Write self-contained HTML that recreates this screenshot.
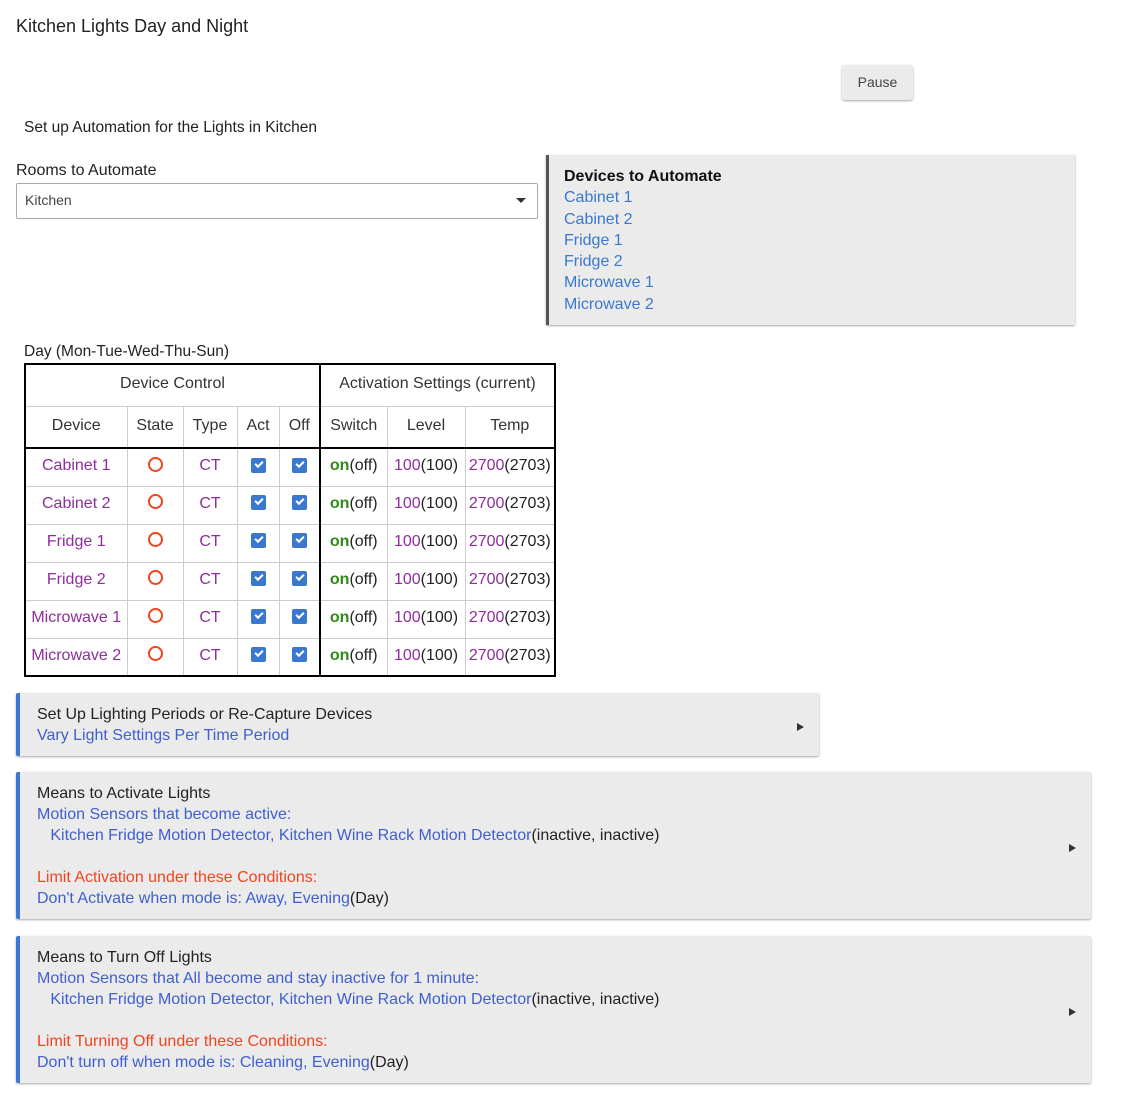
<!DOCTYPE html>
<html><head><meta charset="utf-8"><style>
*{box-sizing:border-box;margin:0;padding:0}
body{width:1126px;height:1107px;background:#fff;font-family:"Liberation Sans",sans-serif;color:#222;position:relative;overflow:hidden}
.a{position:absolute;white-space:nowrap}
.blue{color:#3f5fcf}
.lb{color:#3a78d0}
.red{color:#f0441f}
.pur{color:#8e2d9c}
.grn{color:#2f8a17;font-weight:bold}
.card{position:absolute;background:#ebebeb;border-left:4px solid #3a78d6;border-radius:2px;box-shadow:0 1px 2px rgba(0,0,0,.35);font-size:16px;line-height:21px;padding:11px 0 0 17px}
.arrow{position:absolute;width:0;height:0;border-top:4.5px solid transparent;border-bottom:4.5px solid transparent;border-left:7px solid #333}
table{position:absolute;left:24px;top:363px;border-collapse:collapse;border:2px solid #000;font-size:16px}
td,th{border:1px solid #ccc;text-align:center;font-weight:normal;height:38px;padding:0 0 2px}
th{height:42px;color:#333}
.tk{border-right:2px solid #000}
.hb th{border-bottom:2px solid #000}
.r1 th{border-bottom:1px solid #ccc}
.o{display:inline-block;width:15px;height:15px;border:2px solid #f0441f;border-radius:50%;vertical-align:middle;position:relative;top:-2px}
.cb{display:inline-block;width:15px;height:15px;background:#3a78d0;border-radius:2px;vertical-align:middle;position:relative;top:-1px}
.cb:after{content:"";position:absolute;left:4px;top:3px;width:6px;height:3px;border-left:2px solid #fff;border-bottom:2px solid #fff;transform:rotate(-45deg)}
</style></head><body>
<div class="a" style="left:16px;top:16px;font-size:18px;color:#222">Kitchen Lights Day and Night</div>
<div class="a" style="left:842px;top:65px;width:71px;height:35px;background:#ebebeb;border-radius:3px;box-shadow:0 1px 2px rgba(0,0,0,.35);font-size:14px;color:#444;text-align:center;line-height:35px">Pause</div>
<div class="a" style="left:24px;top:119px;font-size:15.5px">Set up Automation for the Lights in Kitchen</div>
<div class="a" style="left:16px;top:162px;font-size:16px">Rooms to Automate</div>
<div class="a" style="left:16px;top:183px;width:522px;height:36px;border:1px solid #aaa;border-radius:2px;font-size:14px;color:#444;padding:8px 0 0 8px">Kitchen
<div class="arrow" style="left:499px;top:14px;border:none;border-left:5px solid transparent;border-right:5px solid transparent;border-top:5px solid #333"></div></div>
<div class="a" style="left:546px;top:155px;width:529px;height:170px;background:#ebebeb;border-left:3px solid #555;box-shadow:0 1px 2px rgba(0,0,0,.35);padding:11px 0 0 15px;font-size:16px;line-height:21.3px">
<div style="font-weight:bold;color:#111">Devices to Automate</div>
<div class="lb">Cabinet 1</div><div class="lb">Cabinet 2</div><div class="lb">Fridge 1</div><div class="lb">Fridge 2</div><div class="lb">Microwave 1</div><div class="lb">Microwave 2</div></div>
<div class="a" style="left:24px;top:343px;font-size:15.5px">Day (Mon-Tue-Wed-Thu-Sun)</div>
<table>
<tr class="r1"><th colspan="5" class="tk">Device Control</th><th colspan="3">Activation Settings (current)</th></tr>
<tr class="hb"><th style="width:102px">Device</th><th style="width:56px">State</th><th style="width:54px">Type</th><th style="width:42px">Act</th><th style="width:41px" class="tk">Off</th><th style="width:67px">Switch</th><th style="width:78px">Level</th><th style="width:90px">Temp</th></tr>
<tr><td class="pur">Cabinet 1</td><td><span class="o"></span></td><td class="pur">CT</td><td><span class="cb"></span></td><td class="tk"><span class="cb"></span></td><td><span class="grn">on</span>(off)</td><td><span class="pur">100</span>(100)</td><td><span class="pur">2700</span>(2703)</td></tr>
<tr><td class="pur">Cabinet 2</td><td><span class="o"></span></td><td class="pur">CT</td><td><span class="cb"></span></td><td class="tk"><span class="cb"></span></td><td><span class="grn">on</span>(off)</td><td><span class="pur">100</span>(100)</td><td><span class="pur">2700</span>(2703)</td></tr>
<tr><td class="pur">Fridge 1</td><td><span class="o"></span></td><td class="pur">CT</td><td><span class="cb"></span></td><td class="tk"><span class="cb"></span></td><td><span class="grn">on</span>(off)</td><td><span class="pur">100</span>(100)</td><td><span class="pur">2700</span>(2703)</td></tr>
<tr><td class="pur">Fridge 2</td><td><span class="o"></span></td><td class="pur">CT</td><td><span class="cb"></span></td><td class="tk"><span class="cb"></span></td><td><span class="grn">on</span>(off)</td><td><span class="pur">100</span>(100)</td><td><span class="pur">2700</span>(2703)</td></tr>
<tr><td class="pur">Microwave 1</td><td><span class="o"></span></td><td class="pur">CT</td><td><span class="cb"></span></td><td class="tk"><span class="cb"></span></td><td><span class="grn">on</span>(off)</td><td><span class="pur">100</span>(100)</td><td><span class="pur">2700</span>(2703)</td></tr>
<tr><td class="pur">Microwave 2</td><td><span class="o"></span></td><td class="pur">CT</td><td><span class="cb"></span></td><td class="tk"><span class="cb"></span></td><td><span class="grn">on</span>(off)</td><td><span class="pur">100</span>(100)</td><td><span class="pur">2700</span>(2703)</td></tr>
</table>
<div class="card" style="left:16px;top:693px;width:803px;height:63px">
<div>Set Up Lighting Periods or Re-Capture Devices</div>
<div class="blue">Vary Light Settings Per Time Period</div>
<div class="arrow" style="left:777px;top:30px"></div></div>
<div class="card" style="left:16px;top:772px;width:1075px;height:147px">
<div>Means to Activate Lights</div>
<div class="blue">Motion Sensors that become active:</div>
<div>&nbsp;&nbsp;&nbsp;<span class="blue">Kitchen Fridge Motion Detector, Kitchen Wine Rack Motion Detector</span>(inactive, inactive)</div>
<div>&nbsp;</div>
<div class="red">Limit Activation under these Conditions:</div>
<div><span class="blue">Don't Activate when mode is: Away, Evening</span>(Day)</div>
<div class="arrow" style="left:1049px;top:72px"></div></div>
<div class="card" style="left:16px;top:936px;width:1075px;height:147px">
<div>Means to Turn Off Lights</div>
<div class="blue">Motion Sensors that All become and stay inactive for 1 minute:</div>
<div>&nbsp;&nbsp;&nbsp;<span class="blue">Kitchen Fridge Motion Detector, Kitchen Wine Rack Motion Detector</span>(inactive, inactive)</div>
<div>&nbsp;</div>
<div class="red">Limit Turning Off under these Conditions:</div>
<div><span class="blue">Don't turn off when mode is: Cleaning, Evening</span>(Day)</div>
<div class="arrow" style="left:1049px;top:72px"></div></div>
</body></html>
